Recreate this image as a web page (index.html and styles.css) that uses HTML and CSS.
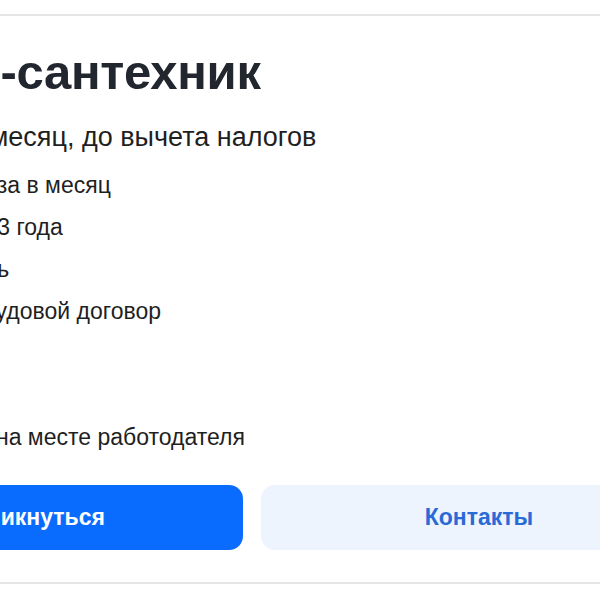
FILE: index.html
```html
<!DOCTYPE html>
<html lang="ru">
<head>
  <meta charset="UTF-8" />
  <meta name="viewport" content="width=device-width, initial-scale=1.0"/>
  <title>Слесарь-сантехник</title>
  <link rel="stylesheet" href="styles.css">
</head>
<body>

  <div class="frame">
    <section class="vacancy">
      <h1 class="vacancy-title">Слесарь-сантехник</h1>
      <p class="vacancy-salary">от 90 000 ₽ за месяц, до вычета налогов</p>

      <ul class="vacancy-info">
        <li>Выплаты: два раза в месяц</li>
        <li>Опыт работы: 1–3 года</li>
        <li>Полная занятость</li>
        <li>Оформление: трудовой договор</li>
        <li>График: 5/2</li>
        <li>Рабочие часы: 8</li>
        <li>Формат работы: на месте работодателя</li>
      </ul>

      <div class="vacancy-actions">
        <button class="btn btn-primary">Откликнуться</button>
        <button class="btn btn-secondary">Контакты</button>
      </div>
    </section>
  </div>

</body>
</html>
```

FILE: styles.css
```css
body {
  margin: 0;
  background: #fff;
  font-family: 'Liberation Sans', Arial, sans-serif;
  color: #1f1f1f;
}
.frame {
  width: 600px;
  height: 600px;
  overflow: hidden;
  padding-top: 14px;
  box-sizing: border-box;
}
.vacancy {
  width: 890px;
  margin-left: -193px;
  padding: 30px 0 32px;
  border-top: 2px solid #e5e6e8;
  border-bottom: 2px solid #e5e6e8;
}
/* заголовок чуть выступает влево за край колонки */
.vacancy-title {
  margin: 0 0 0 -12px;
  font-size: 49px;
  line-height: 52px;
  font-weight: bold;
  letter-spacing: -0.3px;
  color: #22262e;
}
.vacancy-salary {
  margin: 24px 0 0;
  font-size: 27px;
  line-height: 30px;
}
.vacancy-info {
  list-style: none;
  margin: 18px 0 0;
  padding: 0 0 0 10px;
  display: flex;
  flex-direction: column;
  gap: 12px;
  font-size: 23px;
  line-height: 30px;
}
.vacancy-actions {
  margin-top: 33px;
  display: grid;
  grid-template-columns: 1fr 1fr;
  gap: 18px;
}
.btn {
  height: 65px;
  border: none;
  border-radius: 14px;
  font-family: inherit;
  font-size: 23px;
  font-weight: bold;
  cursor: pointer;
}
.btn-primary {
  background: #0a6cff;
  color: #fff;
}
.btn-secondary {
  background: #edf4fe;
  color: #2a6ad6;
}
```
